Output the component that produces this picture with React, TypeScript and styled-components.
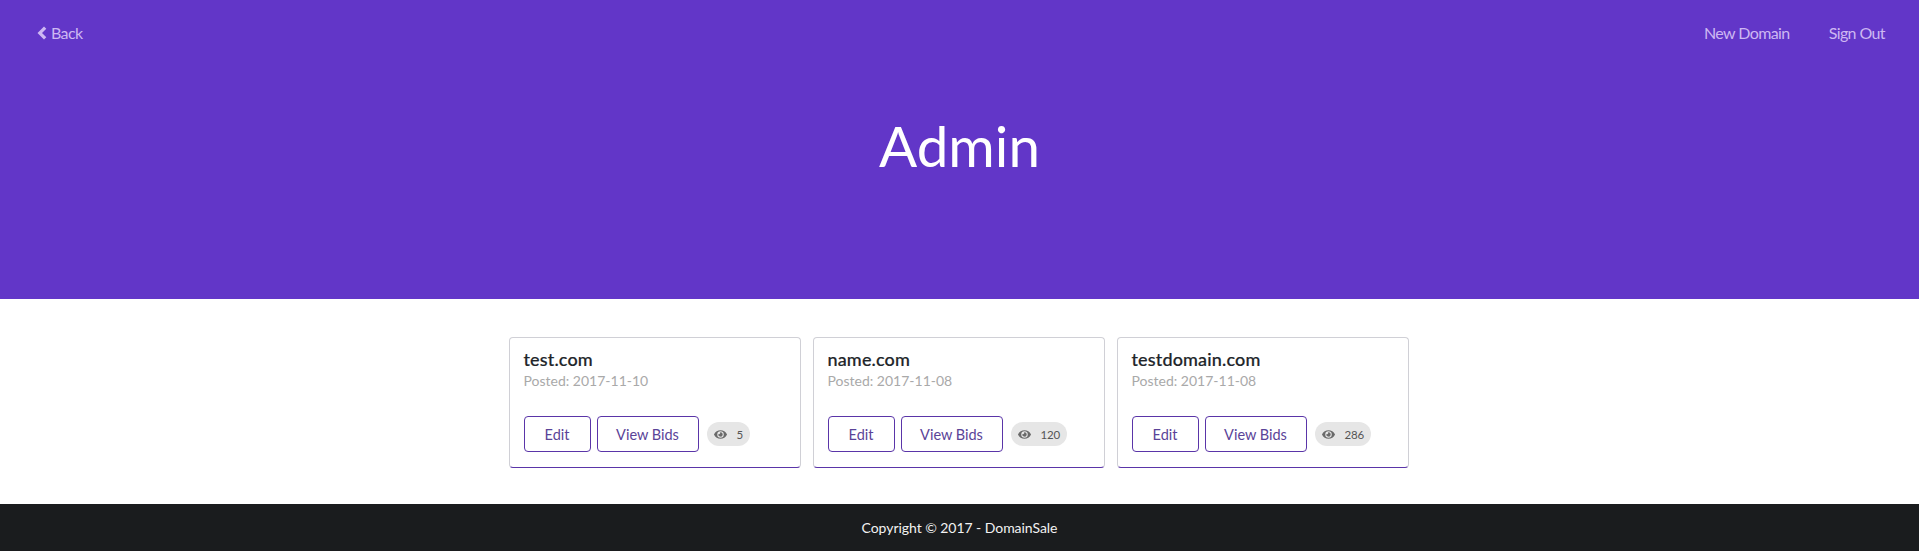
import * as React from "react";
import styled, { createGlobalStyle } from "styled-components";
import { FaEye } from "react-icons/fa";

const GlobalStyle = createGlobalStyle`
  html, body {
    margin: 0;
    padding: 0;
    background: #fff;
    font-family: Lato, "Open Sans", sans-serif;
  }
`;

const Hero = styled.header`
  height: 299px;
  background: #6236c8;
  display: flex;
  flex-direction: column;
`;

const Nav = styled.nav`
  display: flex;
  justify-content: space-between;
  align-items: center;
  height: 65px;
  padding: 0 34px 0 37px;
`;

const NavLink = styled.a`
  display: inline-flex;
  align-items: center;
  gap: 4px;
  color: #cdb8f2;
  font-size: 16px;
  letter-spacing: -0.6px;
`;

const NavRight = styled.div`
  display: flex;
  gap: 39px;
`;

const Chevron = styled.svg`
  width: 10px;
  height: 14px;
  fill: #cdb8f2;
`;

const Title = styled.h1`
  margin: 44px 0 0;
  text-align: center;
  color: #fff;
  font-size: 56.5px;
  line-height: 72px;
  font-weight: 400;
`;

const Main = styled.main`
  display: flex;
  justify-content: center;
  gap: 12px;
  padding: 38px 2px 36px 0;
`;

const Card = styled.article`
  width: 292px;
  height: 131px;
  box-sizing: border-box;
  padding: 10px 14px 0;
  border: 1px solid #d0d0d6;
  border-bottom: 1px solid #5a35a8;
  border-radius: 4px;
  background: #fff;
`;

const CardTitle = styled.h4`
  margin: 0;
  font-size: 18px;
  line-height: 22px;
  font-weight: 500;
  letter-spacing: 0.15px;
  color: #212529;
  -webkit-text-stroke: 0.2px #212529;
`;

const Posted = styled.p`
  margin: 1px 0 0;
  font-size: 14px;
  line-height: 20px;
  color: #a9a9a9;
`;

const Actions = styled.div`
  display: flex;
  align-items: center;
  gap: 6px;
  margin-top: 25px;
`;

const OutlineButton = styled.a<{ $width: number }>`
  display: flex;
  align-items: center;
  justify-content: center;
  width: ${(p) => p.$width}px;
  height: 36px;
  box-sizing: border-box;
  border: 1px solid #5a35a8;
  border-radius: 4px;
  color: #5a4398;
  font-size: 14.5px;
`;

const Views = styled.span`
  display: inline-flex;
  align-items: center;
  height: 24px;
  margin-left: 2px;
  padding: 0 7px;
  gap: 10px;
  border-radius: 12px;
  background: #e6e6e6;
  color: #555;
  font-size: 11.5px;
  letter-spacing: -0.2px;

  svg {
    width: 13px;
    height: 13px;
    color: #6a6a6a;
  }
`;

const Footer = styled.footer`
  height: 47px;
  background: #1a1c1e;
  color: #f2f2f2;
  display: flex;
  align-items: center;
  justify-content: center;
  font-size: 14px;
  letter-spacing: -0.05px;
`;

const domains = [
  { name: "test.com", posted: "2017-11-10", views: 5 },
  { name: "name.com", posted: "2017-11-08", views: 120 },
  { name: "testdomain.com", posted: "2017-11-08", views: 286 },
];

export default function App() {
  return (
    <>
      <GlobalStyle />
      <Hero>
        <Nav>
          <NavLink>
            <Chevron viewBox="0 0 10 14">
              <path d="M7 0.5 L9.3 2.8 L5 7 L9.3 11.2 L7 13.5 L0.5 7 Z" />
            </Chevron>
            Back
          </NavLink>
          <NavRight>
            <NavLink>New Domain</NavLink>
            <NavLink>Sign Out</NavLink>
          </NavRight>
        </Nav>
        <Title>Admin</Title>
      </Hero>
      <Main>
        {domains.map((d) => (
          <Card key={d.name}>
            <CardTitle>{d.name}</CardTitle>
            <Posted>Posted: {d.posted}</Posted>
            <Actions>
              <OutlineButton $width={67}>Edit</OutlineButton>
              <OutlineButton $width={102}>View Bids</OutlineButton>
              <Views>
                <FaEye />
                {d.views}
              </Views>
            </Actions>
          </Card>
        ))}
      </Main>
      <Footer>Copyright © 2017 - DomainSale</Footer>
    </>
  );
}
